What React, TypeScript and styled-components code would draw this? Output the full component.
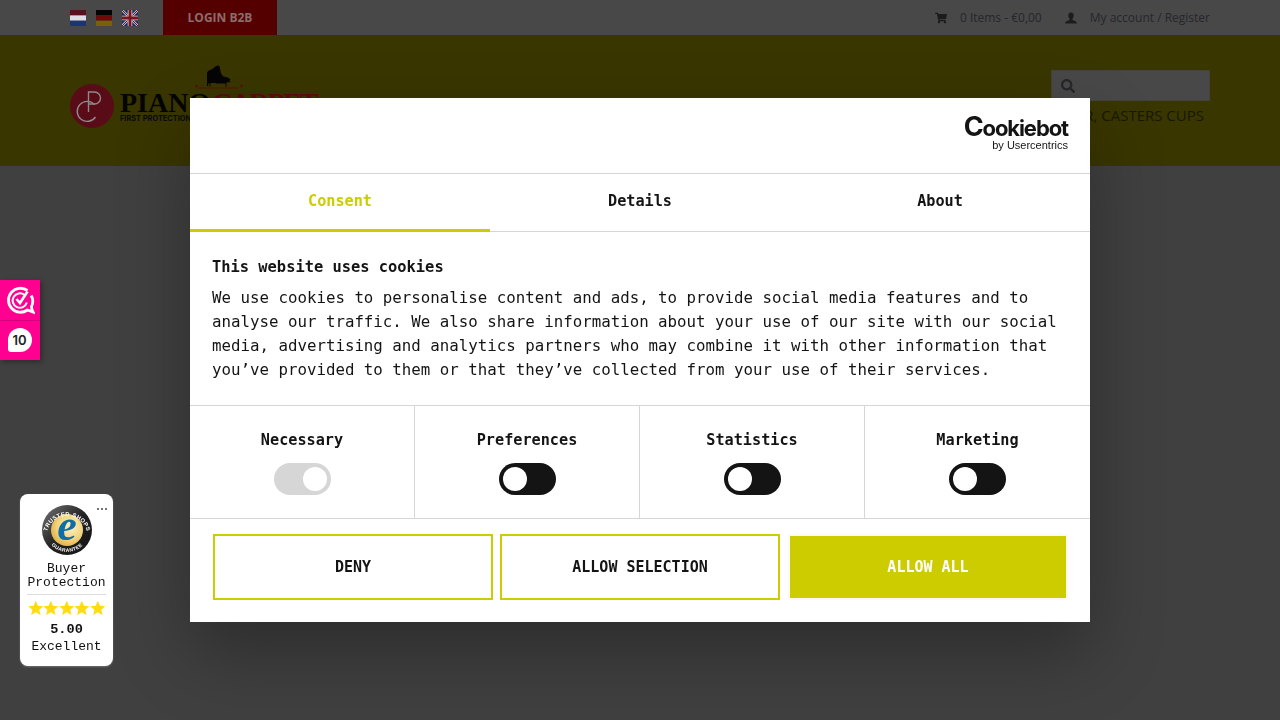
import React from 'react';
import styled, { createGlobalStyle } from 'styled-components';
import { FaSearch, FaShoppingCart } from 'react-icons/fa';

const GlobalStyle = createGlobalStyle`
    html,
    body {
        margin: 0;
        padding: 0;
        height: 100%;
        background: #404040;
        font-family: 'Open Sans', 'Liberation Sans', sans-serif;
        overflow: hidden;
    }
    * {
        box-sizing: border-box;
    }
`;

const MONO = `'DejaVu Sans Mono', 'Liberation Mono', monospace`;
const BADGE_MONO = `'Liberation Mono', 'DejaVu Sans Mono', monospace`;
const LIME = '#cccc00';
const LINE = '#d6d6d6';
const INK = '#141414';

const NlFlag = () => (
    <svg width="16" height="16" viewBox="0 0 16 16">
        <rect width="16" height="5.4" fill="#581020" />
        <rect y="5.4" width="16" height="5.3" fill="#dcdce2" />
        <rect y="10.7" width="16" height="5.3" fill="#1c3570" />
    </svg>
);

const DeFlag = () => (
    <svg width="16" height="16" viewBox="0 0 16 16">
        <rect width="16" height="5.4" fill="#050505" />
        <rect y="5.4" width="16" height="5.3" fill="#6e0a0a" />
        <rect y="10.7" width="16" height="5.3" fill="#75620a" />
    </svg>
);

const UkFlag = () => (
    <svg width="16" height="16" viewBox="0 0 16 16">
        <rect width="16" height="16" fill="#1c2f66" />
        <path d="M0 0L16 16M16 0L0 16" stroke="#b8b8c0" strokeWidth="2.4" />
        <path d="M0 0L16 16M16 0L0 16" stroke="#6e1520" strokeWidth="1" />
        <path d="M8 0V16M0 8H16" stroke="#c4c4cc" strokeWidth="4.6" />
        <path d="M8 0V16M0 8H16" stroke="#7a1520" strokeWidth="2.8" />
    </svg>
);

const UserIcon = () => (
    <svg viewBox="0 0 13 13">
        <path
            d="M6.5 0.5C8.3 0.5 9.4 1.9 9.4 3.8C9.4 5.2 8.8 6.6 8 7.3V8.2C8 8.8 9.2 9.2 10.6 9.8C12 10.4 12.8 10.8 12.8 12.5H0.2C0.2 10.8 1 10.4 2.4 9.8C3.8 9.2 5 8.8 5 8.2V7.3C4.2 6.6 3.6 5.2 3.6 3.8C3.6 1.9 4.7 0.5 6.5 0.5Z"
            fill="#1c1c1c"
        />
    </svg>
);

const PianoIcon = () => (
    <svg width="50" height="26" viewBox="0 0 50 26">
        <path
            d="M12 21V9C12 6 14 5.5 16.5 4.5C18.5 3.5 20.5 0.5 23 0.5C24.5 0.5 25 2 25.2 4.5C25.5 7.5 26.5 10 28.5 11.5L33 12.5L35.5 14.5L34.5 15.5L35.5 17L31.5 17.5V21.5H30.5V18.5H21V18H15.5V21.5H14.5V18.5H13.2V21Z"
            fill="#050505"
        />
        <circle cx="1.5" cy="21" r="1.3" fill="#5a0c14" />
        <circle cx="46.5" cy="21" r="1.3" fill="#5a0c14" />
        <rect x="3.5" y="22.5" width="40" height="1" fill="#5a0c14" />
    </svg>
);

const MonogramIcon = () => (
    <svg width="44" height="44" viewBox="0 0 44 44">
        <circle cx="22" cy="22" r="22" fill="#590b18" />
        <path d="M24.5 20.5A10 10 0 1 0 25.5 33" fill="none" stroke="#8d8a88" strokeWidth="1.4" />
        <path d="M18.5 28V8H24.5A6 6 0 0 1 24.5 20H18.5" fill="none" stroke="#8d8a88" strokeWidth="1.4" />
    </svg>
);

const SealIcon = () => (
    <svg width="50" height="50" viewBox="0 0 50 50" overflow="visible">
        <defs>
            <radialGradient id="sealGold" cx="0.6" cy="0.4" r="0.7">
                <stop offset="0" stopColor="#fff3c4" />
                <stop offset="0.6" stopColor="#f2d27a" />
                <stop offset="1" stopColor="#d9a93c" />
            </radialGradient>
            <linearGradient id="sealRing" x1="0" y1="0" x2="1" y2="1">
                <stop offset="0" stopColor="#777" />
                <stop offset="0.5" stopColor="#222" />
                <stop offset="1" stopColor="#111" />
            </linearGradient>
            <path id="sealTop" d="M4.8 28A20.5 20.5 0 0 1 45.2 28" />
            <path id="sealBottom" d="M3.6 30A22 22 0 0 0 46.4 30" />
        </defs>
        <circle cx="25" cy="25" r="25" fill="url(#sealRing)" />
        <circle cx="25" cy="25" r="16" fill="url(#sealGold)" />
        <text fill="#fff" fontSize="5.8" fontWeight="700" fontFamily="'Liberation Sans', sans-serif" letterSpacing="0.35">
            <textPath href="#sealTop" startOffset="50%" textAnchor="middle">
                TRUSTED SHOPS
            </textPath>
        </text>
        <text fill="#fff" fontSize="5" fontWeight="700" fontFamily="'Liberation Sans', sans-serif" letterSpacing="0.35">
            <textPath href="#sealBottom" startOffset="50%" textAnchor="middle">
                GUARANTEE
            </textPath>
        </text>
        <text
            x="25"
            y="35"
            textAnchor="middle"
            fill="#0d6ea8"
            fontSize="44"
            fontStyle="italic"
            fontWeight="700"
            fontFamily="'Liberation Serif', serif"
        >
            e
        </text>
    </svg>
);

const StarIcon = () => (
    <svg width="16" height="16" viewBox="0 0 24 24">
        <path d="M12 1l3.3 7.6 8.2.7-6.2 5.4 1.9 8.1L12 18.5l-7.2 4.3 1.9-8.1L.5 9.3l8.2-.7z" fill="#ffdc0f" />
    </svg>
);

const CheckBubbleIcon = () => (
    <svg width="30" height="30" viewBox="0 0 30 30">
        <path
            d="M22.5 5.5A12 12 0 1 0 22.5 25L28 27C26.8 25 26.5 23.2 26.5 21.5A12 12 0 0 0 26.2 10.5"
            fill="none"
            stroke="#fff"
            strokeWidth="2.8"
        />
        <path d="M19.5 10A7.2 7.2 0 1 0 21.8 17.5" fill="none" stroke="#fff" strokeWidth="2" />
        <path d="M11.5 14L15 18L22.5 6.5" fill="none" stroke="#fff" strokeWidth="2.6" />
    </svg>
);

const Page = styled.div`
    width: 1280px;
    height: 720px;
    background: #404040;
`;

const TopBar = styled.div`
    height: 35px;
    padding: 0 70px;
    background: #484848;
    display: flex;
    justify-content: space-between;
    align-items: stretch;
`;

const TopLeft = styled.div`
    display: flex;
    align-items: center;
`;

const Flags = styled.div`
    display: flex;
    gap: 10px;
    margin-right: 25px;
`;

const FlagLink = styled.a`
    display: block;
    width: 16px;
    height: 16px;
    svg {
        display: block;
    }
`;

const LoginButton = styled.a`
    height: 35px;
    width: 114px;
    display: flex;
    align-items: center;
    justify-content: center;
    background: #550000;
    color: #8c6c6c;
    font-size: 12px;
    font-weight: 700;
`;

const TopRight = styled.div`
    display: flex;
    align-items: center;
    color: #26262c;
    font-size: 12px;
`;

const TopLink = styled.a`
    display: flex;
    align-items: center;
    gap: 13px;
    margin-left: 23px;
    svg {
        width: 12px;
        height: 12px;
        color: #1c1c1c;
    }
`;

const SiteHeader = styled.div`
    height: 131px;
    padding: 30px 70px 0;
    background: #3a3600;
    display: flex;
    justify-content: space-between;
`;

const Logo = styled.div`
    display: flex;
    align-items: flex-start;
    gap: 6px;
    svg {
        display: block;
    }
`;

const LogoMark = styled.div`
    margin-top: 19px;
`;

const LogoText = styled.div`
    display: flex;
    flex-direction: column;
`;

const LogoPiano = styled.div`
    height: 26px;
    margin-left: 75px;
`;

const LogoName = styled.div`
    display: flex;
    gap: 2px;
    height: 22px;
    margin-top: 1px;
    font-family: 'Liberation Serif', serif;
    font-size: 28px;
    font-weight: 700;
    line-height: 22px;
    color: #050505;
`;

const LogoRed = styled.span`
    color: #5a0c14;
    letter-spacing: -1.8px;
`;

const LogoTagline = styled.div`
    font-family: 'Inter', sans-serif;
    font-size: 7.4px;
    font-weight: 700;
    line-height: 10px;
    color: #0a0a0a;
    white-space: nowrap;
`;

const HeaderRight = styled.div`
    width: 159px;
    margin-top: 5px;
    display: flex;
    flex-direction: column;
    align-items: flex-end;
`;

const SearchBox = styled.div`
    width: 159px;
    height: 31px;
    padding-left: 9px;
    background: #484848;
    border: 1px solid #43433a;
    display: flex;
    align-items: center;
    color: #26262a;
    svg {
        width: 14px;
        height: 14px;
    }
`;

const NavLine = styled.div`
    margin-top: 5px;
    padding-right: 6px;
    white-space: nowrap;
    color: #181800;
    font-size: 15px;
    line-height: 19px;
`;

const SideWidget = styled.div`
    position: fixed;
    left: 0;
    top: 280px;
    width: 40px;
    height: 80px;
    background: #ff0090;
    box-shadow: 2px 2px 5px rgba(0, 0, 0, 0.3);
    display: flex;
    flex-direction: column;
`;

const SideCell = styled.div<{ $divider?: boolean }>`
    flex: 1;
    display: flex;
    align-items: center;
    justify-content: center;
    border-bottom: ${(p) => (p.$divider ? '1px solid #d8007c' : 'none')};
`;

const CountBubble = styled.div`
    width: 24px;
    height: 24px;
    margin-left: -1px;
    border-radius: 50%;
    border-bottom-left-radius: 3px;
    background: #fff;
    color: #222;
    display: flex;
    align-items: center;
    justify-content: center;
    font-family: 'Inter', sans-serif;
    font-size: 13px;
    font-weight: 600;
`;

const TrustBadge = styled.div`
    position: fixed;
    left: 20px;
    top: 494px;
    width: 93px;
    height: 172px;
    padding: 11px 7px 0;
    background: #fff;
    border-radius: 8px;
    box-shadow: 0 1px 2px rgba(255, 255, 255, 0.25);
    display: flex;
    flex-direction: column;
    align-items: center;
    font-family: ${BADGE_MONO};
    font-size: 13px;
    line-height: 14px;
    color: #111;
    text-align: center;
`;

const BadgeDots = styled.div`
    position: absolute;
    top: 14px;
    right: 6px;
    display: flex;
    gap: 2px;
    span {
        width: 2px;
        height: 2px;
        border-radius: 50%;
        background: #444;
    }
`;

const BadgeSeal = styled.div`
    height: 50px;
    margin-bottom: 7px;
    svg {
        display: block;
    }
`;

const BadgeRule = styled.div`
    align-self: stretch;
    height: 1px;
    margin: 4px 0 5px;
    background: #dcdcdc;
`;

const BadgeStars = styled.div`
    display: flex;
    width: 78px;
    justify-content: space-between;
    margin-bottom: 6px;
    svg {
        display: block;
    }
`;

const BadgeScore = styled.div`
    font-size: 13.6px;
    font-weight: 700;
    line-height: 16px;
    margin-bottom: 2px;
`;

const Backdrop = styled.div`
    position: fixed;
    inset: 0;
    display: flex;
    align-items: center;
    justify-content: center;
`;

const Dialog = styled.div`
    width: 900px;
    height: 524px;
    background: #fff;
    color: ${INK};
    font-family: ${MONO};
    box-shadow: 0 32px 68px rgba(0, 0, 0, 0.3);
    display: flex;
    flex-direction: column;
`;

const DialogHead = styled.div`
    height: 76px;
    padding: 19px 22px 0 0;
    border-bottom: 1px solid ${LINE};
    display: flex;
    justify-content: flex-end;
`;

const Wordmark = styled.div`
    display: flex;
    flex-direction: column;
    align-items: flex-end;
    font-family: 'Inter', sans-serif;
    color: #141414;
`;

const WordmarkName = styled.div`
    font-size: 22px;
    font-weight: 700;
    line-height: 20px;
    letter-spacing: -1.1px;
`;

const WordmarkBig = styled.span`
    font-size: 27px;
    font-weight: 700;
    line-height: 20px;
`;

const WordmarkSub = styled.div`
    font-family: 'Liberation Sans', sans-serif;
    font-size: 11px;
    line-height: 11px;
    margin-top: 2px;
`;

const Tabs = styled.div`
    height: 58px;
    border-bottom: 1px solid ${LINE};
    display: grid;
    grid-template-columns: repeat(3, 300px);
`;

const Tab = styled.div<{ $active?: boolean }>`
    height: 58px;
    padding-bottom: 2px;
    display: flex;
    align-items: center;
    justify-content: center;
    font-size: 15.2px;
    font-weight: 700;
    color: ${(p) => (p.$active ? LIME : INK)};
    border-bottom: 3px solid ${(p) => (p.$active ? LIME : 'transparent')};
`;

const Content = styled.div`
    height: 174px;
    padding: 24px 22px 0;
    border-bottom: 1px solid ${LINE};
`;

const Title = styled.div`
    font-size: 15.4px;
    font-weight: 700;
    line-height: 22px;
    margin-bottom: 8px;
`;

const Paragraph = styled.div`
    font-size: 15.78px;
    line-height: 24px;
    white-space: pre-line;
`;

const Categories = styled.div`
    height: 113px;
    border-bottom: 1px solid ${LINE};
    display: grid;
    grid-template-columns: repeat(4, 225px);
`;

const Category = styled.div<{ $last?: boolean }>`
    padding-top: 24px;
    border-right: ${(p) => (p.$last ? 'none' : `1px solid ${LINE}`)};
    display: flex;
    flex-direction: column;
    align-items: center;
    gap: 13px;
`;

const CategoryName = styled.div`
    font-size: 15.2px;
    font-weight: 700;
    line-height: 20px;
`;

const Toggle = styled.div<{ $locked?: boolean }>`
    width: 57px;
    height: 32px;
    padding: 4px;
    border-radius: 16px;
    background: ${(p) => (p.$locked ? LINE : INK)};
    display: flex;
    justify-content: ${(p) => (p.$locked ? 'flex-end' : 'flex-start')};
`;

const Knob = styled.span`
    width: 24px;
    height: 24px;
    border-radius: 50%;
    background: #fff;
`;

const Footer = styled.div`
    flex: 1;
    padding: 15px 22px 0 23px;
    display: flex;
    gap: 7px;
    align-items: flex-start;
`;

const ActionButton = styled.button<{ $filled?: boolean }>`
    width: 280px;
    height: 66px;
    margin-left: ${(p) => (p.$filled ? '1px' : '0')};
    padding: 0;
    border: 2px solid ${(p) => (p.$filled ? '#fafaf0' : LIME)};
    background: ${(p) => (p.$filled ? LIME : '#fff')};
    background-clip: padding-box;
    color: ${(p) => (p.$filled ? '#fff' : INK)};
    font-family: ${MONO};
    font-size: 15px;
    font-weight: 600;
`;

const categories = ['Necessary', 'Preferences', 'Statistics', 'Marketing'];

const App = () => {
    return (
        <>
            <GlobalStyle />
            <Page>
                <TopBar>
                    <TopLeft>
                        <Flags>
                            <FlagLink>
                                <NlFlag />
                            </FlagLink>
                            <FlagLink>
                                <DeFlag />
                            </FlagLink>
                            <FlagLink>
                                <UkFlag />
                            </FlagLink>
                        </Flags>
                        <LoginButton>LOGIN B2B</LoginButton>
                    </TopLeft>
                    <TopRight>
                        <TopLink>
                            <FaShoppingCart />
                            0 Items - €0,00
                        </TopLink>
                        <TopLink>
                            <UserIcon />
                            My account / Register
                        </TopLink>
                    </TopRight>
                </TopBar>
                <SiteHeader>
                    <Logo>
                        <LogoMark>
                            <MonogramIcon />
                        </LogoMark>
                        <LogoText>
                            <LogoPiano>
                                <PianoIcon />
                            </LogoPiano>
                            <LogoName>
                                PIANO
                                <LogoRed>CARPET</LogoRed>
                            </LogoName>
                            <LogoTagline>FIRST PROTECTION</LogoTagline>
                        </LogoText>
                    </Logo>
                    <HeaderRight>
                        <SearchBox>
                            <FaSearch />
                        </SearchBox>
                        <NavLine>PIANO COVER, CASTERS CUPS</NavLine>
                    </HeaderRight>
                </SiteHeader>
            </Page>
            <SideWidget>
                <SideCell $divider>
                    <CheckBubbleIcon />
                </SideCell>
                <SideCell>
                    <CountBubble>10</CountBubble>
                </SideCell>
            </SideWidget>
            <TrustBadge>
                <BadgeDots>
                    <span />
                    <span />
                    <span />
                </BadgeDots>
                <BadgeSeal>
                    <SealIcon />
                </BadgeSeal>
                <div>Buyer</div>
                <div>Protection</div>
                <BadgeRule />
                <BadgeStars>
                    <StarIcon />
                    <StarIcon />
                    <StarIcon />
                    <StarIcon />
                    <StarIcon />
                </BadgeStars>
                <BadgeScore>5.00</BadgeScore>
                <div>Excellent</div>
            </TrustBadge>
            <Backdrop>
                <Dialog>
                    <DialogHead>
                        <Wordmark>
                            <WordmarkName>
                                <WordmarkBig>C</WordmarkBig>ookiebot
                            </WordmarkName>
                            <WordmarkSub>by Usercentrics</WordmarkSub>
                        </Wordmark>
                    </DialogHead>
                    <Tabs>
                        <Tab $active>Consent</Tab>
                        <Tab>Details</Tab>
                        <Tab>About</Tab>
                    </Tabs>
                    <Content>
                        <Title>This website uses cookies</Title>
                        <Paragraph>
                            {`We use cookies to personalise content and ads, to provide social media features and to
analyse our traffic. We also share information about your use of our site with our social
media, advertising and analytics partners who may combine it with other information that
you’ve provided to them or that they’ve collected from your use of their services.`}
                        </Paragraph>
                    </Content>
                    <Categories>
                        {categories.map((name, i) => (
                            <Category key={name} $last={i === categories.length - 1}>
                                <CategoryName>{name}</CategoryName>
                                <Toggle $locked={i === 0}>
                                    <Knob />
                                </Toggle>
                            </Category>
                        ))}
                    </Categories>
                    <Footer>
                        <ActionButton>DENY</ActionButton>
                        <ActionButton>ALLOW SELECTION</ActionButton>
                        <ActionButton $filled>ALLOW ALL</ActionButton>
                    </Footer>
                </Dialog>
            </Backdrop>
        </>
    );
};

export default App;
